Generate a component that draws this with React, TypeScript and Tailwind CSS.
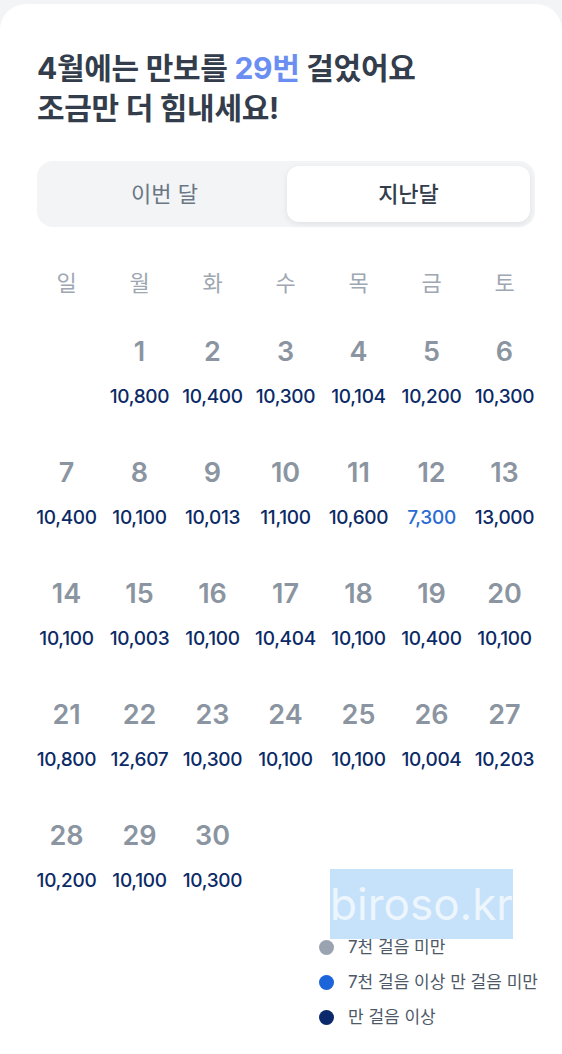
import React from "react";

type Day = { d: number; steps: number } | null;

const days: Day[] = [
  null,
  { d: 1, steps: 10800 },
  { d: 2, steps: 10400 },
  { d: 3, steps: 10300 },
  { d: 4, steps: 10104 },
  { d: 5, steps: 10200 },
  { d: 6, steps: 10300 },
  { d: 7, steps: 10400 },
  { d: 8, steps: 10100 },
  { d: 9, steps: 10013 },
  { d: 10, steps: 11100 },
  { d: 11, steps: 10600 },
  { d: 12, steps: 7300 },
  { d: 13, steps: 13000 },
  { d: 14, steps: 10100 },
  { d: 15, steps: 10003 },
  { d: 16, steps: 10100 },
  { d: 17, steps: 10404 },
  { d: 18, steps: 10100 },
  { d: 19, steps: 10400 },
  { d: 20, steps: 10100 },
  { d: 21, steps: 10800 },
  { d: 22, steps: 12607 },
  { d: 23, steps: 10300 },
  { d: 24, steps: 10100 },
  { d: 25, steps: 10100 },
  { d: 26, steps: 10004 },
  { d: 27, steps: 10203 },
  { d: 28, steps: 10200 },
  { d: 29, steps: 10100 },
  { d: 30, steps: 10300 },
];

const weekdays = ["일", "월", "화", "수", "목", "금", "토"];

const stepColor = (s: number) =>
  s >= 10000 ? "text-[#0b2a66]" : s >= 7000 ? "text-[#2a6bd4]" : "text-[#9aa4b1]";

const App = () => {
  return (
    <div
      className="min-h-screen bg-[#f2f4f6] pt-[4px]"
      style={{ fontFamily: 'Inter, "Noto Sans CJK KR", sans-serif' }}
    >
      <div className="relative min-h-[1050px] rounded-t-[26px] bg-white">
        <div className="pt-[44px] pl-[37px]">
          <h1 className="text-[30px] font-bold leading-[40px] tracking-[-0.3px] text-[#333d4b]">
            4월에는 만보를 <span className="text-[#6a8ef2]">29번</span> 걸었어요
            <br />
            조금만 더 힘내세요!
          </h1>
        </div>

        <div className="ml-[37px] mt-[33px] flex h-[66px] w-[498px] rounded-[16px] bg-[#f2f4f6] p-[5px]">
          <button className="flex flex-1 items-center justify-center text-[22px] text-[#6b7684]">
            이번 달
          </button>
          <button className="flex w-[243px] items-center justify-center rounded-[12px] bg-white text-[22px] font-medium text-[#333d4b] shadow-[0_2px_6px_rgba(0,0,0,0.08)]">
            지난달
          </button>
        </div>

        <div className="ml-[30px] mt-[41px] w-[511px]">
          <div className="grid grid-cols-7">
            {weekdays.map((w) => (
              <div key={w} className="h-[30px] text-center text-[22px] leading-[30px] text-[#9ea7b2]">
                {w}
              </div>
            ))}
          </div>
          <div className="mt-[36px] grid grid-cols-7">
            {days.map((day, i) => (
              <div key={i} className="flex h-[121px] flex-col items-center">
                {day && (
                  <>
                    <span className="text-[27px] font-semibold leading-[36px] text-[#8b95a1]">
                      {day.d}
                    </span>
                    <span
                      className={`mt-[16px] whitespace-nowrap text-[19px] font-medium leading-[22px] tracking-[-0.3px] ${stepColor(
                        day.steps
                      )}`}
                    >
                      {day.steps.toLocaleString("en-US")}
                    </span>
                  </>
                )}
              </div>
            ))}
          </div>
        </div>

        <div className="absolute left-[319px] top-[933px] flex flex-col gap-[14px]">
          <div className="flex items-center gap-[14px]">
            <span className="h-[15px] w-[15px] rounded-full bg-[#9aa4b1]" />
            <span className="text-[17px] leading-[21px] text-[#4e5968]">7천 걸음 미만</span>
          </div>
          <div className="flex items-center gap-[14px]">
            <span className="h-[15px] w-[15px] rounded-full bg-[#1b64da]" />
            <span className="text-[17px] leading-[21px] text-[#4e5968]">7천 걸음 이상 만 걸음 미만</span>
          </div>
          <div className="flex items-center gap-[14px]">
            <span className="h-[15px] w-[15px] rounded-full bg-[#0a2a6b]" />
            <span className="text-[17px] leading-[21px] text-[#4e5968]">만 걸음 이상</span>
          </div>
        </div>

        <div className="absolute left-[330px] top-[865px] flex h-[70px] w-[183px] items-center justify-center bg-[#c6e2fb] text-[44px] leading-none text-white/70">
          biroso.kr
        </div>
      </div>
    </div>
  );
};

export default App;
